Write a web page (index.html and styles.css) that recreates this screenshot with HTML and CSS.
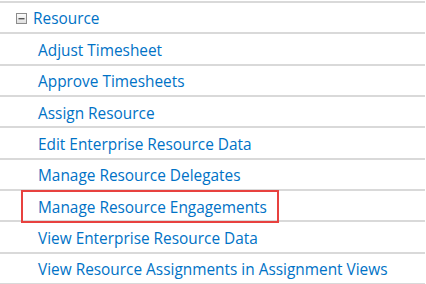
FILE: index.html
```html
<!DOCTYPE html>
<html>
<head>
<meta charset="utf-8">
<link rel="stylesheet" href="styles.css">
</head>
<body>
<ul class="list">
  <li class="row head">
    <span class="toggle"><svg width="11" height="11" viewBox="0 0 11 11"><defs><linearGradient id="g" x1="0" y1="0" x2="0" y2="1"><stop offset="0" stop-color="#fdfdfd"/><stop offset="1" stop-color="#dedede"/></linearGradient></defs><rect x="0.5" y="0.5" width="10" height="10" fill="url(#g)" stroke="#8c8c8c"/><rect x="2.5" y="5" width="6" height="1.4" fill="#555"/></svg></span>
    <a class="link">Resource</a>
  </li>
  <li class="row item"><a class="link">Adjust Timesheet</a></li>
  <li class="row item"><a class="link">Approve Timesheets</a></li>
  <li class="row item"><a class="link">Assign Resource</a></li>
  <li class="row item"><a class="link">Edit Enterprise Resource Data</a></li>
  <li class="row item"><a class="link">Manage Resource Delegates</a></li>
  <li class="row item marked"><a class="link">Manage Resource Engagements</a><span class="highlight"></span></li>
  <li class="row item"><a class="link">View Enterprise Resource Data</a></li>
  <li class="row item"><a class="link">View Resource Assignments in Assignment Views</a></li>
</ul>
</body>
</html>
```
FILE: styles.css
```css
html, body {
  margin: 0;
  padding: 0;
  background: #ffffff;
}
body {
  padding-top: 1px;
  font-family: "Open Sans", "Noto Sans", sans-serif;
  font-size: 15.4px;
}
.list {
  list-style: none;
  margin: 0;
  padding: 0;
  width: 425px;
  border-top: 2px solid #d9d9d9;
}
.row {
  position: relative;
  display: flex;
  align-items: center;
  height: 26.33px;
  padding-top: 3px;
  box-sizing: content-box;
  border-bottom: 2px solid #d9d9d9;
}
.head {
  height: 28.33px;
  padding-top: 1px;
  padding-left: 16px;
}
.toggle {
  display: flex;
  width: 11px;
  height: 11px;
  margin-right: 6px;
}
.item {
  padding-left: 38px;
}
.link {
  color: #0072c6;
  text-decoration: none;
  white-space: nowrap;
}
.highlight {
  position: absolute;
  left: 21px;
  top: -1px;
  width: 258px;
  height: 33px;
  box-sizing: border-box;
  border: 2px solid #e8413f;
}
```
